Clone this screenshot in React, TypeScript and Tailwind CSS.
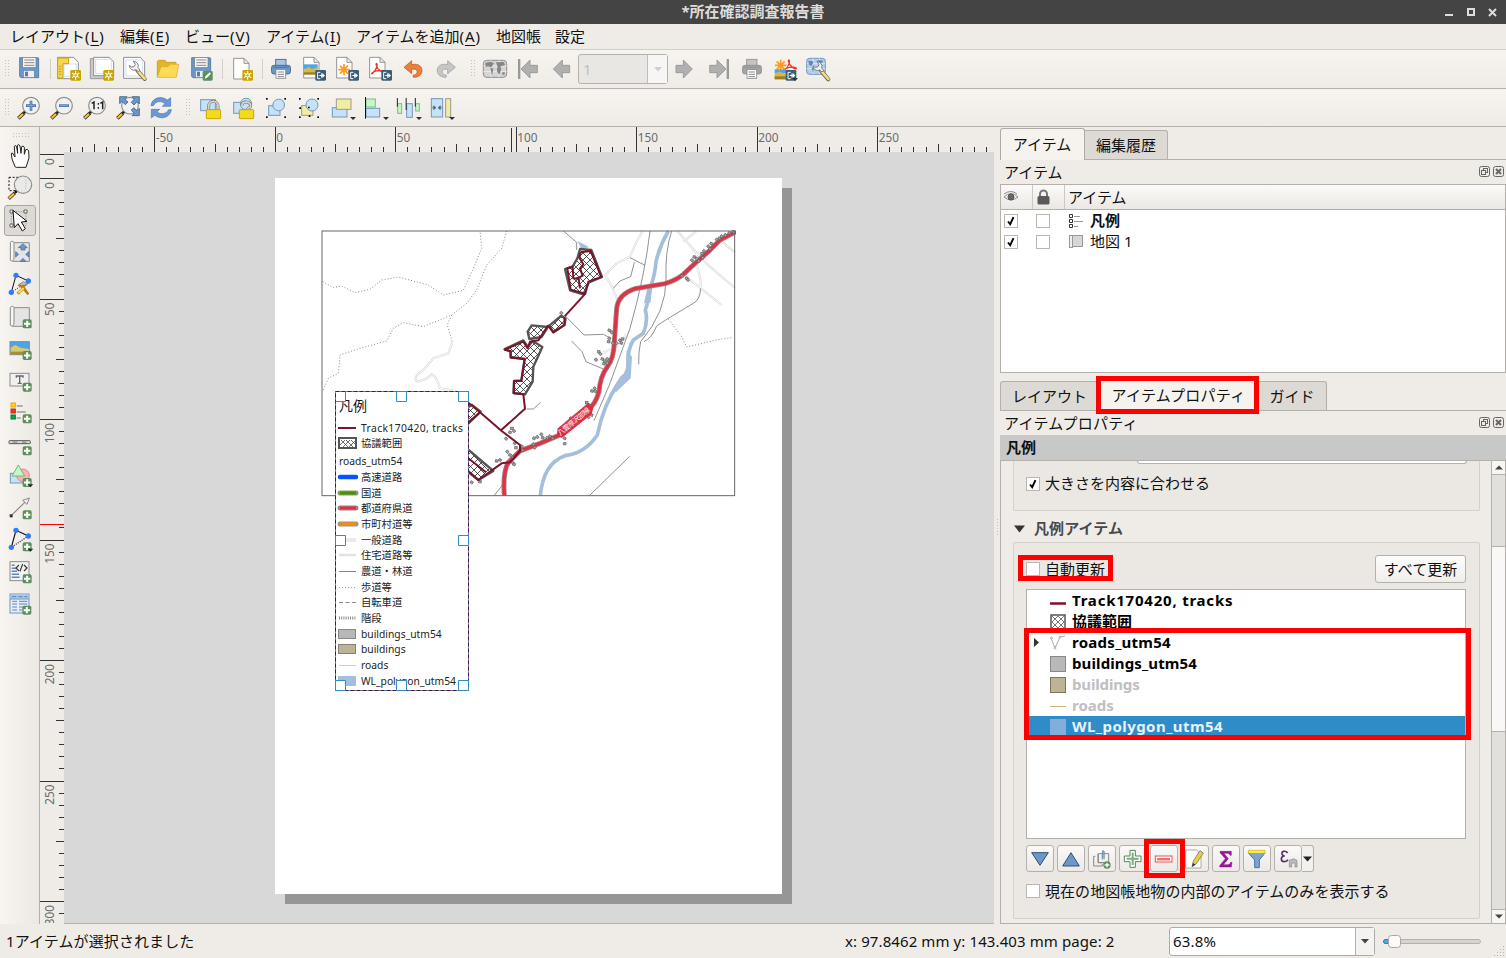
import React from 'react';

type Kids = { children?: React.ReactNode };

/* Icon drawn on a grid of three units per pixel; x/y give the grid origin. */
function Ic({ x, y, w = 24, h = 24, children }: Kids & { x: number; y: number; w?: number; h?: number }) {
  return (
    <svg width={w} height={h} viewBox={`${x} ${y} ${w * 3} ${h * 3}`} className="block shrink-0 overflow-visible">
      {children}
    </svg>
  );
}

function Btn({ children }: Kids) {
  return <div className="flex h-8 w-[33px] shrink-0 items-center justify-center">{children}</div>;
}

function Grip() {
  return (
    <svg width="5" height="18" className="block shrink-0">
      {[0, 1, 2, 3, 4, 5].map((i) => (
        <g key={i} fill="#c4c1bc">
          <rect x="0" y={i * 3} width="1" height="1" />
          <rect x="3" y={i * 3} width="1" height="1" />
        </g>
      ))}
    </svg>
  );
}

function Sep() {
  return <div className="h-5 w-px shrink-0 bg-[#d3d0cb]" />;
}

function Star({ x, y }: { x: number; y: number }) {
  return (
    <g transform={`translate(${x} ${y})`}>
      <rect width="32" height="32" rx="4" fill="#c9a500" />
      <path d="M16 3v26M5 9l22 14M27 9L5 23" stroke="#fff" strokeWidth="3.2" />
      <circle cx="16" cy="16" r="6.5" fill="#fff" />
      <circle cx="16" cy="16" r="3.5" fill="#c9a500" />
    </g>
  );
}

function Plus({ x, y }: { x: number; y: number }) {
  return (
    <g transform={`translate(${x} ${y})`}>
      <rect width="27" height="27" rx="5" fill="#5b8f5b" />
      <path d="M13.500 4v19M4 13.500h19" stroke="#fff" strokeWidth="6" />
    </g>
  );
}

function Export({ x, y }: { x: number; y: number }) {
  return (
    <g transform={`translate(${x} ${y})`}>
      <rect width="32" height="32" rx="4" fill="#3d5d75" />
      <path d="M15 7H7v19h8M19 10v13M12 16.500h12" fill="none" stroke="#fff" strokeWidth="3" />
      <path d="M21 9l8 7.500-8 7.500z" fill="#fff" />
    </g>
  );
}

function Floppy({ x, y }: { x: number; y: number }) {
  return (
    <g transform={`translate(${x} ${y})`}>
      <path d="M2 2H56a3 3 0 0 1 3 3V62H6L2 58Z" fill="#6b98c8" stroke="#4a73a3" strokeWidth="2.500" />
      <rect x="11" y="1" width="40" height="31" fill="#f4f4f4" stroke="#777" strokeWidth="2" />
      <path d="M16 9H46M16 17H46M16 25H46" stroke="#8a8a8a" strokeWidth="3" />
      <rect x="13" y="40" width="33" height="22" fill="#eee" stroke="#5c7fa8" strokeWidth="2" />
      <rect x="18" y="44" width="9" height="14" fill="#4f7fb5" />
    </g>
  );
}

function Sheet({ x, y }: { x: number; y: number }) {
  return (
    <path
      transform={`translate(${x} ${y})`}
      d="M1 1H32L47 16V63H1ZM32 1V16H47"
      fill="#fff"
      stroke="#8c8c8c"
      strokeWidth="2.800"
    />
  );
}

function Wrench({ x, y }: { x: number; y: number }) {
  return (
    <g transform={`translate(${x} ${y})`}>
      <path d="M26 28L48 54" stroke="#6f6540" strokeWidth="12" strokeLinecap="round" />
      <path d="M28 30L48 53" stroke="#f1df83" strokeWidth="8" strokeLinecap="round" />
      <path
        d="M2 13a14 14 0 0 0 20 13l7 6 5-5-6-7A14 14 0 0 0 14 1l6 9-4 7-8 1Z"
        fill="#f2f2f2"
        stroke="#666"
        strokeWidth="2.500"
      />
    </g>
  );
}

function Printer({ x, y, gray }: { x: number; y: number; gray?: boolean }) {
  const a = gray ? '#a3a3a3' : '#6b98c8';
  const b = gray ? '#909090' : '#3f6488';
  return (
    <g transform={`translate(${x} ${y})`}>
      <rect x="14" y="1" width="31" height="22" fill={gray ? '#c3c3c3' : '#a9c4e0'} stroke={b} strokeWidth="2.500" />
      <rect x="1.500" y="19" width="57" height="26" rx="7" fill={a} stroke={b} strokeWidth="2.500" />
      <path d="M6 25H54" stroke={b} strokeWidth="2" />
      <rect x="15" y="32" width="29" height="26" fill="#fff" stroke="#8c8c8c" strokeWidth="2.500" />
      <path d="M20 39H39M20 46H39M20 53H39" stroke="#888" strokeWidth="3" />
    </g>
  );
}

function Asterisk({ x, y }: { x: number; y: number }) {
  return (
    <path
      transform={`translate(${x} ${y})`}
      d="M17 0V34M0 17H34M5 5L29 29M29 5L5 29"
      stroke="#ff9a1a"
      strokeWidth="5"
    />
  );
}

function Acrobat({ x, y }: { x: number; y: number }) {
  return (
    <path
      transform={`translate(${x} ${y})`}
      d="M14 0C20 0 16 17 2 31C-2 34 -1 27 9 24C22 20 38 21 37 26C34 29 17 20 13 4Z"
      fill="none"
      stroke="#f0372c"
      strokeWidth="3.800"
    />
  );
}

function Arrow({ x, y, flip, bar }: { x: number; y: number; flip?: boolean; bar?: boolean }) {
  return (
    <g transform={flip ? `translate(${x + 60} ${y}) scale(-1 1)` : `translate(${x} ${y})`} fill="#b0b0b0" stroke="#939393" strokeWidth="2.500">
      {bar && <rect x="0" y="0" width="7" height="60" stroke="none" fill="#999" />}
      <path d="M9 30L36 3V19H58V41H36V57Z" />
    </g>
  );
}

function Lens({ x, y, children }: Kids & { x: number; y: number }) {
  return (
    <g transform={`translate(${x} ${y})`}>
      <path d="M3 65L20 49" stroke="#3a3420" strokeWidth="11" />
      <path d="M4 64L17 52" stroke="#ffc52e" strokeWidth="6" />
      <circle cx="22" cy="46" r="4.500" fill="#111" />
      <circle cx="41" cy="27" r="25" fill="#f1f1f1" stroke="#8d8d8d" strokeWidth="3.500" />
      {children}
    </g>
  );
}

function Drop({ x, y }: { x: number; y: number }) {
  return <path d={`M${x - 9} ${y}h18l-9 9z`} fill="#2e2e2e" />;
}

function Padlock({ x, y, open }: { x: number; y: number; open?: boolean }) {
  const shackle = open ? 'M8 13C12 2 34 0 35 16C35 22 28 20 24 26' : 'M8 28V16A14 14 0 0 1 36 16V28';
  return (
    <g transform={`translate(${x} ${y})`}>
      <path d={shackle} fill="none" stroke="#767676" strokeWidth="9" />
      <path d={shackle} fill="none" stroke="#d8d8d0" strokeWidth="5" />
      <rect x="1" y="27" width="43" height="27" rx="2" fill="#f2da1c" stroke="#c9a500" strokeWidth="3" />
    </g>
  );
}

const blue = { fill: '#c5e2f8', stroke: '#6f9ab8', strokeWidth: 3 };
const green = { fill: '#c6f5c8', stroke: '#7dbb80', strokeWidth: 3 };
const yellow = { fill: '#f3ee9e', stroke: '#999', strokeWidth: 3 };

function Corners({ x, y }: { x: number; y: number }) {
  return (
    <g fill="#000">
      {[0, 55].map((a) => [0, 55].map((b) => <rect key={`${a}-${b}`} x={x + a} y={y + b} width="5" height="5" />))}
    </g>
  );
}

const undoPath =
  'M1212 202L1235 182V194C1255 189 1267 199 1266 213C1265 225 1255 232 1240 232L1239 226C1250 224 1254 217 1250 211C1247 207 1242 207 1235 208V221Z';

function TopBarOne() {
  return (
    <div className="flex h-[39px] items-center border-b border-[#b4b1ad] bg-linear-to-b from-[#f7f4f0] to-[#efece7] pl-[5px]">
      <Grip />
      <div className="w-[2.500px]" />
      <Btn><Ic x={51} y={171}><Floppy x={57} y={171} /></Ic></Btn>
      <div className="w-[4px]" /><Sep /><div className="w-[2px]" />
      <Btn>
        <Ic x={171} y={171}>
          <path d="M173 172H221L235 187V236H173Z" fill="#fff" stroke="#8c8c8c" strokeWidth="3" />
          <path d="M192 192H229V229H192Z" fill="none" stroke="#c8d6f2" strokeWidth="2.500" />
          <path d="M173 174H206V191H189V234H173Z" fill="#f7d558" stroke="#c9a500" strokeWidth="3" />
          <path d="M177 199h7M177 207h7M177 215h7M177 223h7" stroke="#a58200" strokeWidth="2" />
          <Star x={211} y={210} />
        </Ic>
      </Btn>
      <Btn>
        <Ic x={270} y={171}>
          <path d="M271 176H327V236H271Z" fill="#c9c9c9" stroke="#9a9a9a" strokeWidth="3" />
          <path d="M281 172H328L341 186V227H281Z" fill="#fff" stroke="#8c8c8c" strokeWidth="3" />
          <path d="M287 178H334V221H287Z" fill="none" stroke="#c8d6f2" strokeWidth="2.500" />
          <Star x={310} y={210} />
        </Ic>
      </Btn>
      <Btn>
        <Ic x={369} y={171}>
          <path d="M371 172H421L434 186V235H371Z" fill="#fff" stroke="#8c8c8c" strokeWidth="3" />
          <path d="M378 180H427V228H378Z" fill="none" stroke="#c8d6f2" strokeWidth="2.500" />
          <Wrench x={386} y={183} />
        </Ic>
      </Btn>
      <Btn>
        <Ic x={468} y={171}>
          <path d="M472 231V184L475 181H495L499 187H528V195" fill="#e3b428" stroke="#c79b1b" strokeWidth="2.500" />
          <path d="M472 232L483 200H504L510 193H536L529 232Z" fill="#ffda55" stroke="#dcb12f" strokeWidth="2.500" />
        </Ic>
      </Btn>
      <Btn>
        <Ic x={567} y={171}>
          <Floppy x={573} y={171} />
          <rect x="608" y="213" width="30" height="29" rx="4" fill="#5b8f5b" />
          <path d="M614 236l3-8 12-11 4 4-12 12z" fill="#fff" />
        </Ic>
      </Btn>
      <div className="w-[4px]" /><Sep /><div className="w-[4px]" />
      <Btn><Ic x={692} y={171}><Sheet x={699} y={174} /><Star x={726} y={210} /></Ic></Btn>
      <div className="w-[2px]" /><Sep /><div className="w-[2px]" />
      <Btn><Ic x={807} y={171}><Printer x={813} y={177} /></Ic></Btn>
      <Btn>
        <Ic x={905} y={171}>
          <Sheet x={909} y={171} />
          <rect x="910" y="193" width="42" height="14" fill="#4aa6ea" />
          <path d="M910 210L924 200L935 207L952 202V222H910Z" fill="#d7b74c" />
          <path d="M910 217H952V224H910Z" fill="#9c7e20" />
          <Export x={945} y={210} />
        </Ic>
      </Btn>
      <Btn><Ic x={1004} y={171}><Sheet x={1008} y={171} /><Asterisk x={1014} y={192} /><Export x={1044} y={210} /></Ic></Btn>
      <Btn><Ic x={1103} y={171}><Sheet x={1107} y={171} /><Acrobat x={1114} y={190} /><Export x={1143} y={210} /></Ic></Btn>
      <Btn>
        <Ic x={1203} y={171}>
          <path d={undoPath} fill="#ee7f3b" stroke="#b9531b" strokeWidth="2" />
        </Ic>
      </Btn>
      <Btn>
        <Ic x={1302} y={171}>
          <path d={undoPath} transform="translate(2578 0) scale(-1 1)" fill="#c6c6c6" stroke="#a2a2a2" strokeWidth="2.500" />
        </Ic>
      </Btn>
      <div className="w-[8px]" /><Grip /><div className="w-[3px]" />
      <Btn>
        <Ic x={129} y={171}>
          <rect x="130" y="181" width="70" height="51" rx="10" fill="#d4d4d4" stroke="#8e8e8e" strokeWidth="3" />
          <path d="M130 198H200M130 215H200M153 181V232M177 181V232" stroke="#efefef" strokeWidth="2.500" />
          <path d="M136 188l17-3 9 5-8 12-11-3-6 2zM151 203l9 3-4 21zM168 187l24-1 3 10-14 3 3 10-7 2-5-12zM171 203l13 5-6 16-7-10zM187 217h7v7h-7z" fill="#858585" />
        </Ic>
      </Btn>
      <Btn><Ic x={228} y={171}><Arrow x={234} y={177} bar /></Ic></Btn>
      <Btn><Ic x={326} y={171}><Arrow x={330} y={177} /></Ic></Btn>
      <div className="mr-px ml-[0.500px] flex h-[30px] w-[90px] rounded-[3px] border border-[#b5b2ae] bg-[#e9e7e4]">
        <div className="flex flex-1 items-center pl-1 text-[15px] text-[#c2c0bc]">1</div>
        <div className="flex w-[20px] items-center justify-center border-l border-[#bfbcb7] bg-[#f7f6f4]">
          <svg width="8" height="5"><path d="M0 0h8l-4 4.500z" fill="#d1cfcc" /></svg>
        </div>
      </div>
      <Btn><Ic x={698} y={171}><Arrow x={702} y={177} flip /></Ic></Btn>
      <Btn><Ic x={798} y={171}><Arrow x={804} y={177} flip bar /></Ic></Btn>
      <Btn><Ic x={897} y={171}><Printer x={903} y={177} gray /></Ic></Btn>
      <Btn>
        <Ic x={998} y={171}>
          <Acrobat x={1031} y={180} />
          <Asterisk x={1004} y={179} />
          <rect x="1003" y="208" width="34" height="12" fill="#4aa6ea" />
          <path d="M1003 238V220l14-5 20 7v16z" fill="#d7b74c" />
          <path d="M1003 229h34v9h-34z" fill="#9c7e20" />
          <Export x={1036} y={210} />
          <Drop x={1064} y={234} />
        </Ic>
      </Btn>
      <Btn>
        <Ic x={1095} y={171}>
          <rect x="1097" y="175" width="56" height="48" rx="9" fill="#b6cdea" stroke="#6e95c2" strokeWidth="3" />
          <path d="M1097 191H1153M1097 206H1153M1116 175V223M1135 175V223" stroke="#e0ebf8" strokeWidth="2.500" />
          <path d="M1102 182l12 1 3 5-6 10-7-4zM1112 202l7 3-3 13zM1128 181h16l2 6-9 3z" fill="#6089ba" />
          <Wrench x={1114} y={184} />
        </Ic>
      </Btn>
    </div>
  );
}

function TopBarTwo() {
  return (
    <div className="flex h-[38px] items-center border-b border-[#b4b1ad] bg-linear-to-b from-[#f7f4f0] to-[#efece7] pl-[5px]">
      <Grip />
      <div className="w-[2.500px]" />
      <Btn><Ic x={51} y={288}><Lens x={52} y={290}><path d="M41 12V42M26 27H56" stroke="#3f6ea3" strokeWidth="8" /><path d="M41 14V40M28 27H54" stroke="#7ba4d0" strokeWidth="4" /></Lens></Ic></Btn>
      <Btn><Ic x={150} y={288}><Lens x={151} y={290}><path d="M26 27H56" stroke="#3f6ea3" strokeWidth="8" /><path d="M28 27H54" stroke="#7ba4d0" strokeWidth="4" /></Lens></Ic></Btn>
      <Btn><Ic x={249} y={288}><Lens x={250} y={290}><path d="M25 20l7-4v22M51 20l7-4v22" fill="none" stroke="#222" strokeWidth="4.500" /><path d="M43 19h4v5h-4zM43 31h4v5h-4z" fill="#222" /></Lens></Ic></Btn>
      <Btn>
        <Ic x={348} y={288}>
          <Lens x={349} y={290} />
          <g fill="#6b98c8" stroke="#3f6488" strokeWidth="2.500">
            <path d="M359 290h22l-7 7 10 9-8 8-10-10-7 7z" />
            <path d="M418 290v22l-7-7-9 10-8-8 9-10-7-7z" />
            <path d="M418 347v-22l-7 7-10-9-7 7 9 10-7 7z" />
          </g>
        </Ic>
      </Btn>
      <Btn>
        <Ic x={447} y={288}>
          <path d="M453 317C455 298 474 288 493 295L502 300L512 293V319H487L495 311C483 301 468 303 460 317Z" fill="#6b98d6" stroke="#4779b5" strokeWidth="2" />
          <path d="M514 329C511 349 491 358 473 351L464 346L454 354V328H479L471 336C484 345 499 342 506 329Z" fill="#6b98d6" stroke="#4779b5" strokeWidth="2" />
        </Ic>
      </Btn>
      <div className="w-[8px]" /><Grip /><div className="w-[3px]" />
      <Btn><Ic x={594} y={288}><rect x="602" y="299" width="44" height="33" {...blue} /><Padlock x={618} y={302} /></Ic></Btn>
      <Btn><Ic x={693} y={288}><rect x="701" y="307" width="33" height="33" {...blue} /><circle cx="738" cy="312" r="17" {...blue} /><Padlock x={717} y={302} open /></Ic></Btn>
      <Btn><Ic x={792} y={288}><rect x="806" y="317" width="34" height="29" {...blue} /><circle cx="836" cy="315" r="17.500" {...blue} /><Corners x={798} y={294} /></Ic></Btn>
      <Btn><Ic x={891} y={288}><rect x="905" y="317" width="34" height="29" {...yellow} /><circle cx="936" cy="315" r="18" {...blue} /><Corners x={897} y={294} /><path d="M898 322h5v5h-5zM924 320h5v5h-5zM926 346h5v5h-5z" /></Ic></Btn>
      <Btn><Ic x={991} y={288}><rect x="998" y="323" width="44" height="28" {...blue} /><rect x="1010" y="297" width="44" height="31" {...yellow} /><Drop x={1060} y={351} /></Ic></Btn>
      <Btn><Ic x={1089} y={288}><rect x="1098" y="297" width="28" height="24" {...green} /><rect x="1098" y="325" width="41" height="26" {...blue} /><path d="M1096.500 291V356" stroke="#111" strokeWidth="3" /><Drop x={1158} y={351} /></Ic></Btn>
      <Btn>
        <Ic x={1188} y={288}>
          <rect x="1193" y="311" width="12" height="29" {...green} /><rect x="1220" y="311" width="17" height="41" {...blue} /><rect x="1247" y="311" width="11" height="22" {...green} />
          <path d="M1192 294V320M1218.500 294V330M1246 294V320" stroke="#222" strokeWidth="3" /><Drop x={1257} y={351} />
        </Ic>
      </Btn>
      <Btn>
        <Ic x={-33} y={288}>
          <rect x="-26" y="296" width="34" height="55" {...blue} /><rect x="17" y="296" width="15" height="55" {...yellow} />
          <path d="M-25 323H-14M-4 323H7M-19 317V329L-12 323ZM1 317V329L-6 323Z" fill="#4a6b88" stroke="#4a6b88" strokeWidth="2" /><Drop x={36} y={351} />
        </Ic>
      </Btn>
    </div>
  );
}

function Tool({ children, on }: Kids & { on?: boolean }) {
  return (
    <div className="flex h-[32.100px] w-full items-center justify-center">
      <div className={on ? 'flex h-[31px] w-8 items-center justify-center rounded-[3px] border border-[#aaa7a3] bg-[#dddad6]' : 'flex h-[31px] w-8 items-center justify-center'}>
        {children}
      </div>
    </div>
  );
}

function Roll() {
  return (
    <>
      <path d="M39 6H89V62H39Z" fill="#e4e4e4" stroke="#8b8b8b" strokeWidth="3" />
      <path d="M32 5C34 1 42 1 43 5V52C43 60 36 63 32 59Z" fill="#f7f7f7" stroke="#8b8b8b" strokeWidth="3" />
    </>
  );
}

function Toolbox() {
  return (
    <div className="flex w-10 shrink-0 flex-col border-r border-[#b4b1ad] bg-linear-to-r from-[#f8f5f1] to-[#ece9e5] pt-[6px]">
      <svg width="40" height="7" className="block">
        {[0, 1, 2, 3, 4, 5].map((i) => (
          <g key={i} fill="#c4c1bc"><rect x={13 + i * 3} y="0" width="1" height="1" /><rect x={13 + i * 3} y="3" width="1" height="1" /></g>
        ))}
      </svg>
      <Tool>
        <Ic x={25} y={56}>
          <path d="M46 124L37 101L35 84Q39 79 43 91L46 95L44 63Q48 57 51 65L54 84L53 60Q58 55 61 62L64 84L66 64Q71 59 74 66V87L78 73Q84 69 87 77L88 98L79 126H50Z" fill="#fff" stroke="#222" strokeWidth="3" />
        </Ic>
      </Tool>
      <Tool>
        <Ic x={25} y={153}>
          <rect x="28" y="157" width="50" height="40" fill="none" stroke="#111" strokeWidth="3" strokeDasharray="6 5" />
          <path d="M27 221L46 203" stroke="#3a3420" strokeWidth="10" /><path d="M28 220L43 206" stroke="#ffc52e" strokeWidth="6" />
          <circle cx="49" cy="200" r="4" />
          <circle cx="70" cy="179" r="26" fill="#e9e9e9" fillOpacity="0.95" stroke="#8d8d8d" strokeWidth="3.500" />
          <path d="M78 165v28" stroke="#ccc" strokeWidth="3" strokeDasharray="4 4" />
        </Ic>
      </Tool>
      <Tool on>
        <Ic x={25} y={250}>
          <rect x="35" y="261" width="44" height="41" fill="none" stroke="#777" strokeWidth="2.500" strokeDasharray="3 4" />
          <g fill="#eee" stroke="#555" strokeWidth="2.500"><path d="M31 256h9v9h-9zM73 256h9v9h-9zM31 298h9v9h-9z" /></g>
          <path d="M40 257L44 309L55 297L68 319L77 312L65 292L82 290Z" fill="#fff" stroke="#111" strokeWidth="3" />
        </Ic>
      </Tool>
      <Tool><Ic x={25} y={-2}><Roll /><g fill="#6b98c8" stroke="#3f6488" strokeWidth="2"><path d="M70 9l13 12h-7v7H64v-7h-8zM48 33l9 8-9 8zM87 33l-9 8 9 8zM62 62l8-9 8 9z" /></g></Ic></Tool>
      <Tool>
        <Ic x={25} y={440}>
          <path d="M35 501L49 450L86 467" fill="none" stroke="#111" strokeWidth="3" />
          <path d="M35 501L60 485" stroke="#111" strokeWidth="3" strokeDasharray="3 4" />
          <path d="M54 480q12-14 32-5l-11 10 14 20-6 4-17-20z" fill="#c2780f" /><path d="M55 481l15-12 16 5-12 6z" fill="#bdbdbd" stroke="#777" strokeWidth="2" />
          <path d="M54 505L72 488" stroke="#9c8a1e" strokeWidth="9" /><path d="M56 503L72 488" stroke="#ffe23e" strokeWidth="6" />
          <g fill="#2f7cf6"><circle cx="49" cy="450" r="8" /><circle cx="86" cy="467" r="8" /><circle cx="35" cy="501" r="8" /></g>
        </Ic>
      </Tool>
      <Tool><Ic x={25} y={-2}><Roll /><Plus x={69} y={41} /></Ic></Tool>
      <Tool>
        <Ic x={25} y={636}>
          <rect x="31" y="650" width="58" height="39" fill="#4aa6ea" stroke="#888" strokeWidth="3" />
          <path d="M33 668L47 660L62 668L88 672V687H33Z" fill="#d9c96e" /><path d="M33 680H88V688H33Z" fill="#a5902c" /><Plus x={69} y={678} />
        </Ic>
      </Tool>
      <Tool><Ic x={25} y={-2}><rect x="31" y="11" width="57" height="38" fill="#f0f0f0" stroke="#8b8b8b" strokeWidth="3" /><path d="M50 24V19H70V24M60 19V40M54 41H66" fill="none" stroke="#666" strokeWidth="4" /><Plus x={69} y={39} /></Ic></Tool>
      <Tool>
        <Ic x={25} y={95}>
          <rect x="34" y="101" width="13" height="12" fill="#ffdd00" stroke="#f09b2e" strokeWidth="3" /><rect x="34" y="119" width="13" height="12" fill="#f03c10" stroke="#b43010" strokeWidth="3" /><rect x="34" y="137" width="13" height="12" fill="#00b050" stroke="#176b3c" strokeWidth="3" />
          <path d="M51 110H69M51 128H78M51 146H63" stroke="#999" strokeWidth="5" /><Plus x={69} y={135} />
        </Ic>
      </Tool>
      <Tool><Ic x={25} y={191}><rect x="28" y="214" width="64" height="9" rx="2" fill="#ddd" stroke="#555" strokeWidth="3" /><path d="M39 218.500H53M67 218.500H80" stroke="#888" strokeWidth="4" /><Plus x={69} y={231} /></Ic></Tool>
      <Tool><Ic x={25} y={288}><rect x="32" y="313" width="44" height="29" {...blue} /><circle cx="70" cy="319" r="19" fill="#f8b3b3" stroke="#e58585" strokeWidth="3" /><path d="M56 288L75 321H37Z" fill="#c6f5c8" stroke="#6fb974" strokeWidth="3" /><Plus x={69} y={327} /><Drop x={92} y={346} /></Ic></Tool>
      <Tool><Ic x={25} y={383}><path d="M35 438L84 391" stroke="#888" strokeWidth="3.500" /><path d="M89 386L69 393L82 405Z" fill="#eee" stroke="#777" strokeWidth="2.500" /><rect x="30" y="435" width="9" height="9" fill="#333" /><Plus x={69} y={423} /></Ic></Tool>
      <Tool>
        <Ic x={25} y={479}>
          <path d="M35 534L49 483L86 500" fill="none" stroke="#111" strokeWidth="3.500" /><path d="M86 500L35 534" stroke="#111" strokeWidth="3.500" strokeDasharray="3 4" />
          <g fill="#2f7cf6"><circle cx="49" cy="483" r="8" /><circle cx="86" cy="500" r="8" /><circle cx="35" cy="534" r="8" /></g><Plus x={69} y={519} /><Drop x={92} y={538} />
        </Ic>
      </Tool>
      <Tool>
        <Ic x={25} y={575}>
          <rect x="31" y="577" width="57" height="57" fill="#f3f3f3" stroke="#8b8b8b" strokeWidth="3" />
          <path d="M36 588H45M36 597H49M36 606H52M36 615H58M36 624H60" stroke="#5c88be" strokeWidth="4.500" />
          <path d="M58 587l-9 9 9 9M73 587l9 9-9 9M69 584l-8 22" fill="none" stroke="#333" strokeWidth="3.500" /><Plus x={69} y={615} />
        </Ic>
      </Tool>
      <Tool>
        <Ic x={25} y={671}>
          <rect x="31" y="674" width="57" height="57" fill="#e6edf7" stroke="#6e95c2" strokeWidth="3" /><path d="M32 676H87V688H32Z" fill="#a9c8e8" />
          <path d="M31 689H88" stroke="#6e95c2" strokeWidth="3" /><path d="M36 682H50M56 682H69M74 682H84M38 696H52M58 696H83M38 704H52M58 704H83M38 713H52M58 713H68M38 722H52M58 722H68" stroke="#5c88be" strokeWidth="3" /><Plus x={68} y={709} />
        </Ic>
      </Tool>
    </div>
  );
}

const range = (n: number) => Array.from({ length: n }, (_, i) => i);

function RulerTop() {
  return (
    <svg width="955" height="25" className="block" fontFamily="'Noto Sans', sans-serif" fontSize="11.800" fill="#6b6b6b">
      {range(77).map((i) => {
        const x = Math.floor(30.45 + 12.05 * i);
        const k = i - 7;
        const len = k % 10 === 0 ? 25 : k % 5 === 0 ? 8 : 5;
        return x < 955 ? <rect key={i} x={x} y={25 - len} width="1" height={len} fill="#333" /> : null;
      })}
      <rect x="471" y="1" width="1" height="24" fill="#333" />
      {[-50, 0, 50, 100, 150, 200, 250].map((v, i) => (
        <text key={v} x={115.800 + 120.500 * i} y="15">{v}</text>
      ))}
    </svg>
  );
}

function RulerLeft() {
  return (
    <svg width="24" height="771" className="block" fontFamily="'Noto Sans', sans-serif" fontSize="11.800" fill="#6b6b6b">
      <rect x="0" y="2" width="24" height="1" fill="#333" />
      <rect x="19" y="14" width="5" height="1" fill="#333" />
      {range(62).map((i) => {
        const y = Math.round(26 + 12.05 * i);
        const len = i % 10 === 0 ? 24 : i % 5 === 0 ? 8 : 5;
        return <rect key={i} x={24 - len} y={y} width={len} height="1" fill="#333" />;
      })}
      <rect x="0" y="372" width="24" height="1" fill="#f00" />
      <text transform="translate(14 13) rotate(-90)">0</text>
      {[0, 50, 100, 150, 200, 250, 300].map((v, i) => (
        <text key={v} textAnchor="end" transform={`translate(14 ${30 + 120.500 * i}) rotate(-90)`}>{v}</text>
      ))}
    </svg>
  );
}

const dark = '#7a1428';

function MapItem() {
  const casing = { fill: 'none', stroke: '#dadada', strokeWidth: 6.5 };
  const inner = { fill: 'none', stroke: '#fff', strokeWidth: 2.6 };
  const thin = { fill: 'none', stroke: '#808080', strokeWidth: 2.6 };
  const dots = { fill: 'none', stroke: '#888', strokeWidth: 3, strokeDasharray: '3 6' };
  const area = { fill: 'url(#hatch)', stroke: '#555', strokeWidth: 7, strokeLinejoin: 'round' as const };
  const track = { fill: 'none', stroke: dark, strokeWidth: 6, strokeLinejoin: 'round' as const };
  const road = 'M648 20L600 45L565 80L525 115L490 148Q470 165 435 176L345 191Q295 208 290 250L283 350Q282 400 262 425Q240 455 237 500Q225 540 205 552L115 632L60 655L0 678L-35 712Q-52 740 -47 812';
  const minor = [
    'M368 18Q345 55 330 95L290 115L256 150L276 185L292 222',
    'M472 18L530 85Q560 120 645 188',
    'M490 148L605 240',
    'M530 85L530 130M490 50L530 18M605 50L645 82M525 115Q545 150 542 195',
    'M245 385L290 365L318 330',
  ];
  const houses: [number, number][] = [
    [200, 533], [207, 540], [216, 498], [224, 490], [226, 499], [236, 380], [241, 387], [268, 316], [275, 322], [268, 340], [266, 350], [278, 354], [247, 402], [255, 408], [262, 402], [252, 416], [262, 414], [300, 346], [308, 342], [290, 354], [304, 354], [228, 404],
    [516, 106], [523, 96], [530, 101], [536, 108], [546, 86], [552, 78], [548, 98], [565, 64], [574, 56], [570, 72], [590, 44], [598, 40], [605, 34], [616, 30], [628, 24], [640, 20], [500, 160], [486, 153], [504, 165], [42, 640], [52, 636], [64, 628], [68, 638], [82, 638], [90, 634], [40, 658], [44, 668], [98, 640], [-16, 655], [8, 676], [-12, 668], [-38, 680], [-30, 690], [-22, 698], [-60, 705], [-70, 708], [-22, 713], [-18, 718], [-24, 610], [-18, 618], [-30, 622], [-42, 641], [134, 640], [134, 656], [205, 577], [215, 570], [152, 580], [-145, 772], [-120, 770], [124, 264], [5, 664],
  ];
  return (
    <svg width="415" height="267" viewBox="-597 15 1245 801" className="absolute left-[257px] top-[78px]">
      <defs>
        <pattern id="hatch" width="21" height="21" patternUnits="userSpaceOnUse">
          <rect width="21" height="21" fill="#fff" />
          <path d="M0 0L21 21M21 0L0 21" stroke="#222" strokeWidth="2.300" />
        </pattern>
      </defs>
      <rect x="-594" y="18" width="1238" height="794" fill="#fff" />
      <g>
        {minor.map((d) => <path key={d} d={d} {...casing} />)}
        {minor.map((d) => <path key={d} d={d} {...inner} />)}
        <path d="M390 18Q375 150 330 310L268 480L222 587M455 18Q435 80 438 160Q440 260 362 350Q355 380 356 418" {...thin} />
        <path d="M130 18L170 52V75M330 98L375 121M343 112L332 155L300 168L280 190M542 190Q540 225 520 235L440 283L410 303Q395 340 372 350M135 272L192 330L250 328L272 340M155 348L186 380L198 410L250 432M208 812L329 694M20 552L40 552L62 532M-78 812L-48 775" {...thin} />
        <path d="M445 283L485 335L500 366L590 345L640 337" {...dots} />
        <path d="M445 18Q420 60 408 110Q405 150 392 185Q385 230 376 255Q385 290 370 325L340 345Q320 380 325 420Q322 450 295 475Q250 540 232 630Q195 685 135 692Q70 715 61 812" fill="none" stroke="#a4bedd" strokeWidth="11" />
        <path d="M382 190L395 190L392 232L372 235ZM320 375L336 395L332 460L300 490L288 502L278 492L300 455L318 440Z" fill="#a4bedd" />
        <path d="M172 48L207 66L186 74Z" fill="#a4bedd" />
        <path d={road} fill="none" stroke="#a88488" strokeWidth="15" />
        <path d={road} fill="none" stroke="#dc3446" strokeWidth="10" />
        {houses.map(([x, y], i) => <rect key={i} x={x - 4} y={y - 3.500} width="8" height="7" fill="#a5a5a5" stroke="#5f5f5f" strokeWidth="2" transform={`rotate(${(i * 37) % 60} ${x} ${y})`} />)}
        <path d="M180 72L214 75L246 156L207 172L190 208L150 196L135 132L158 124L172 100Z" {...area} />
        <path d="M182 82L212 78L244 156L205 170L196 206L152 194L142 130L158 126L160 160L176 162L180 190M182 82L178 98L190 118L180 130L188 152L168 162" {...track} />
        <path d="M196 206L134 274" {...track} />
        <path d="M35 301L84 306L65 336L28 342L23 320ZM88 302L124 272L137 282L133 300L100 322Z" {...area} />
        <path d="M-46 372L10 346L24 366L38 348L67 366L40 425L38 470L15 508L-20 504L-18 468L4 466L14 402L-28 396L-28 380Z" {...area} />
        <path d="M133 276L134 300L100 322L84 302L55 346L30 350L23 370L10 350L-46 374L-28 378L-28 398L14 402L4 468L-18 468L-18 505L10 508L15 551L-57 616" {...track} />
      </g>
      <g transform="translate(-600 0)">
        <path d="M8 170L40 188L65 183L105 203L150 193L185 165L235 156L325 180L370 210L430 196L460 130L485 70L480 18M560 18L545 70L500 120L470 195L440 235L395 270L310 305L250 293L220 310L200 348L120 370L60 390L55 445L25 460L8 500M395 270L382 300L397 350" {...dots} />
        <path d="M397 352L385 385L340 400L310 435Q275 458 292 470Q320 465 335 448Q350 455 360 490L405 497L450 530" {...casing} />
        <path d="M397 352L385 385L340 400L310 435Q275 458 292 470Q320 465 335 448Q350 455 360 490L405 497L450 530" {...inner} />
        <path d="M420 560L456 540L482 560L430 610L380 620ZM400 640L445 674L520 738L475 765L400 705Z" {...area} />
        <path d="M440 530L456 542L480 562L430 605M480 562L545 618L600 660L600 678L570 712L545 715L475 765L430 725M445 700L498 742" {...track} />
      </g>
      <path d="M115 612L205 537L217 550L213 566L125 636L113 630Z" fill="#dc2f42" stroke="#dc2f42" strokeWidth="5" strokeLinejoin="round" />
      <text x="121" y="633" transform="rotate(-40 121 633)" fontSize="21" fill="#fff" textLength="118" fontFamily="'Noto Sans CJK JP', sans-serif">八雲厚沢部線</text>
      <rect x="-594" y="18" width="1238" height="794" fill="none" stroke="#666" strokeWidth="3" />
    </svg>
  );
}

const legendRows: [string, React.ReactNode][] = [
  ['高速道路', <path d="M2 5H18" stroke="#0055ff" strokeWidth="4.500" strokeLinecap="round" />],
  ['国道', <><path d="M2 5H18" stroke="#8a9a70" strokeWidth="5" strokeLinecap="round" /><path d="M2 5H18" stroke="#449500" strokeWidth="3" /></>],
  ['都道府県道', <><path d="M2 5H18" stroke="#a08080" strokeWidth="5" strokeLinecap="round" /><path d="M2 5H18" stroke="#dc3446" strokeWidth="3" /></>],
  ['市町村道等', <><path d="M2 5H18" stroke="#a8927a" strokeWidth="5" strokeLinecap="round" /><path d="M2 5H18" stroke="#f58a14" strokeWidth="3" /></>],
  ['一般道路', <path d="M1 5H18" stroke="#eaeaea" strokeWidth="4" />],
  ['住宅道路等', <path d="M1 5H18" stroke="#e2e2e2" strokeWidth="2.500" />],
  ['農道・林道', <path d="M1 5.500H18" stroke="#888" />],
  ['歩道等', <path d="M1 5.500H18" stroke="#999" strokeDasharray="1 2" />],
  ['自転車道', <path d="M1 5.500H18" stroke="#888" strokeDasharray="4 2.500" />],
  ['階段', <path d="M1 5H18" stroke="#888" strokeWidth="3" strokeDasharray="1 1.200" />],
  ['buildings_utm54', <rect x="0.500" y="0.500" width="17" height="9" fill="#b8b8b8" stroke="#888" />],
  ['buildings', <rect x="0.500" y="0.500" width="17" height="9" fill="#bdb395" stroke="#888070" />],
  ['roads', <path d="M1 5.500H18" stroke="#d8d0b4" />],
  ['WL_polygon_utm54', <rect x="0" y="0" width="18" height="10" fill="#a4bedd" />],
];

function LegendRow({ label, children, wide }: Kids & { label: string; wide?: boolean }) {
  return (
    <div className="flex h-[15.670px] items-center gap-[3px] pl-[3px] whitespace-nowrap">
      <svg width="20" height="10" className="block shrink-0 overflow-visible">{children}</svg>
      <span className={wide ? 'tracking-[0.380px]' : undefined}>{label}</span>
    </div>
  );
}

function Legend() {
  return (
    <div className="absolute left-[271px] top-[239px] h-[300px] w-[134px] overflow-hidden bg-white text-[10.300px] leading-none text-[#222]">
      <div className="pt-[7px] pl-1 text-[14px] leading-[15px] text-[#111]">凡例</div>
      <div className="pt-[7px]">
        <LegendRow label="Track170420, tracks" wide><path d="M0 5H18" stroke={dark} strokeWidth="2" /></LegendRow>
        <LegendRow label="協議範囲">
          <rect x="1" y="0" width="17" height="10" fill="#fff" stroke="#555" strokeWidth="2" />
          <path d="M3 2l7 7M8 2l7 7M13 2l4 4M7 2L2 7M12 2L5 9M17 3l-6 6" stroke="#333" strokeWidth="0.700" />
        </LegendRow>
      </div>
      <div className="flex h-[18px] items-center pt-[2px] pl-1">roads_utm54</div>
      {legendRows.map(([t, g]) => <LegendRow key={t} label={t}>{g}</LegendRow>)}
      <svg width="134" height="300" className="absolute inset-0">
        <rect x="0.500" y="0.500" width="133" height="299" fill="none" stroke="#4aa0d0" />
        <rect x="0.500" y="0.500" width="133" height="299" fill="none" stroke="#5a1030" strokeDasharray="4 2" />
        {[0.5, 61.5, 123.5].map((x) =>
          [0.5, 144.5, 289.5].map((y) => (x === 61.5 && y === 144.5 ? null : <path key={`${x}${y}`} d={x === 0.5 && y === 0.5 ? 'M10.500 0.500V10.500H0.500' : `M${x} ${y}h10v10h-10z`} fill="#fff" stroke="#2f8cc4" />)),
        )}
      </svg>
    </div>
  );
}

function Canvas() {
  return (
    <div className="relative h-[772px] w-[930px] shrink-0 overflow-hidden border-b border-[#b4b1ad] bg-[#d8d8d8]">
      <div className="absolute left-[221px] top-[36px] h-[716px] w-[507px] bg-[#969696]" />
      <div className="absolute left-[211px] top-[26px] h-[716px] w-[507px] bg-white" />
      <MapItem />
      <Legend />
    </div>
  );
}

function DockTitle({ children }: Kids) {
  return (
    <div className="flex h-6 items-center justify-between pr-px pl-[4px]">
      <span>{children}</span>
      <svg width="26" height="12" fill="none" stroke="#666">
        <rect x="0.500" y="0.500" width="10" height="10" rx="2" /><rect x="4.500" y="2.500" width="4" height="4" /><rect x="2.500" y="4.500" width="4" height="4" fill="#efece7" />
        <rect x="14.500" y="0.500" width="10" height="10" rx="2" /><path d="M17 3l5 5M22 3l-5 5" strokeWidth="2" />
      </svg>
    </div>
  );
}

function Check({ on }: { on?: boolean }) {
  return (
    <div className="flex size-[14px] shrink-0 items-center justify-center border border-[#bab7b2] bg-white">
      {on && <svg width="10" height="10"><path d="M2 5.500L4.200 8.200L7.500 1.200" fill="none" stroke="#000" strokeWidth="1.900" /></svg>}
    </div>
  );
}

function ItemsDock() {
  return (
    <div>
      <div className="flex h-[33px] items-end border-b border-[#b4b1ad]">
        <div className="-mb-px flex h-[32px] w-[85px] items-center justify-center rounded-t-[3px] border border-b-0 border-[#aeaba6] bg-[#f6f3ef] pr-px pb-px">アイテム</div>
        <div className="flex h-[29px] w-[83px] items-center justify-center rounded-tr-[3px] border border-b-0 border-l-0 border-[#b4b1ad] bg-[#dddad6]">編集履歴</div>
      </div>
      <DockTitle>アイテム</DockTitle>
      <div className="h-[189px] border border-[#b4b1ad] bg-white">
        <div className="flex h-[25px] border-b border-[#b4b1ad] bg-linear-to-b from-[#fbfaf8] to-[#ebe8e4]">
          <div className="flex w-8 items-center border-r border-[#ccc9c5] pl-[2px]">
            <svg width="16" height="12" fill="none" stroke="#8a8a8a"><path d="M1 6Q8 -1 15 6Q8 12 1 6ZM1 3Q8 -2 14 3" /><circle cx="8" cy="6" r="3" fill="#666" stroke="#555" /></svg>
          </div>
          <div className="flex w-8 items-center border-r border-[#ccc9c5] pl-[4px]">
            <svg width="13" height="16"><path d="M3 8V5a3.500 3.500 0 0 1 7 0V8" fill="none" stroke="#777" strokeWidth="2" /><rect x="0.500" y="7" width="12" height="8.500" rx="1.500" fill="#5a5a5a" /></svg>
          </div>
          <div className="flex items-center pl-[3px]">アイテム</div>
        </div>
        <div className="flex h-[21px] items-center pl-[3px]">
          <Check on /><div className="w-[18px]" /><Check /><div className="w-[19px]" />
          <svg width="14" height="14" className="block"><g fill="#fff" stroke="#333"><path d="M0.500 0.500h3v3h-3zM0.500 5.500h3v3h-3zM0.500 10.500h3v3h-3z" /></g><path d="M5 2.500h6M5 7.500h9M5 12.500h4" stroke="#999" /></svg>
          <b className="pl-[7px]">凡例</b>
        </div>
        <div className="flex h-[21px] items-center pl-[3px]">
          <Check on /><div className="w-[18px]" /><Check /><div className="w-[19px]" />
          <svg width="14" height="13" className="block"><rect x="2.500" y="0.500" width="11" height="11" fill="#d6d6d6" stroke="#999" /><rect x="0.500" y="0.500" width="3" height="12" fill="#eee" stroke="#999" /></svg>
          <span className="pl-[7px]">地図 1</span>
        </div>
      </div>
    </div>
  );
}

function TreeRow({ label, children, muted, sel, branch, track = 'tracking-normal' }: Kids & { label: string; muted?: boolean; sel?: boolean; branch?: boolean; track?: string }) {
  return (
    <div className={sel ? 'flex h-[21px] items-center bg-[#308cc6] text-[#e8f2fa]' : muted ? 'flex h-[21px] items-center text-[#c0c0c0]' : 'flex h-[21px] items-center text-black'}>
      <div className="flex w-[23px] items-center pl-[7px]">{branch && <svg width="6" height="9"><path d="M0 0v9l5-4.500z" fill="#333" /></svg>}</div>
      <svg width="16" height="16" className="block shrink-0">{children}</svg>
      <b className={`pl-[6px] whitespace-nowrap ${track}`}>{label}</b>
    </div>
  );
}

function ToolButton({ children }: Kids) {
  return <div className="flex h-[27px] w-7 items-center justify-center rounded-[3px] border border-[#b4b1ad] bg-linear-to-b from-[#fbfaf9] to-[#ece9e6]">{children}</div>;
}

function PropertiesDock() {
  return (
    <div>
      <div className="flex h-[30px] items-end border-b border-[#b4b1ad]">
        <div className="flex h-[29px] w-[100px] items-center justify-center rounded-tl-[3px] border border-b-0 border-[#b4b1ad] bg-[#dddad6] pr-px">レイアウト</div>
        <div className="-mb-px flex h-[31px] w-[157px] items-center justify-center bg-[#f6f3ef] tracking-[0.250px]">アイテムプロパティ</div>
        <div className="flex h-[29px] w-[70px] items-center justify-center rounded-tr-[3px] border border-b-0 border-l-0 border-[#b4b1ad] bg-[#dddad6] pl-px">ガイド</div>
      </div>
      <DockTitle><span className="tracking-[0.250px]">アイテムプロパティ</span></DockTitle>
      <div className="flex h-[25px] items-center bg-[#c8c8c8] pl-[6px] font-bold">凡例</div>
      <div className="flex h-[464px] border border-[#b4b1ad]">
        <div className="flex w-[490px] flex-col pl-[12px]">
          <div className="h-[50px] w-[467px] rounded-b-[2px] border border-t-0 border-[#d3d0cb] bg-[#ebe8e3] pl-[12px]">
            <div className="ml-[111px] h-[3px] w-[330px] rounded-b-[3px] border border-t-0 border-[#b4b1ad] bg-white" />
            <div className="flex h-[39px] items-center gap-[5px]"><Check on /><span>大きさを内容に合わせる</span></div>
          </div>
          <div className="flex h-[31px] items-center gap-[8px] pt-[4px] font-bold tracking-[0.100px] text-[#4a4a4a]">
            <svg width="13" height="8"><path d="M1 0.500h11L6.500 7.500z" fill="#333" /></svg><span>凡例アイテム</span>
          </div>
          <div className="h-[377px] w-[467px] rounded-[2px] border border-[#d3d0cb] bg-[#ebe8e3] px-[12px] pt-[12px]">
            <div className="flex h-7 w-[440px] items-center justify-between">
              <div className="flex items-center gap-[5px]"><Check /><span>自動更新</span></div>
              <div className="flex h-7 w-[91px] items-center justify-center rounded-[3px] border border-[#b4b1ad] bg-linear-to-b from-[#fdfdfc] to-[#f0eeeb]">すべて更新</div>
            </div>
            <div className="mt-[6px] h-[250px] w-[440px] border border-[#b4b1ad] bg-white">
              <TreeRow label="Track170420, tracks" track="tracking-[0.780px]"><path d="M0 10.500H16" stroke={dark} strokeWidth="2.500" /></TreeRow>
              <TreeRow label="協議範囲">
                <rect x="1" y="1" width="14" height="14" fill="#fff" stroke="#555" strokeWidth="1.500" />
                <path d="M2 8l6-6 6 6-6 6zM2 2l12 12M14 2L2 14" fill="none" stroke="#555" strokeWidth="0.800" />
              </TreeRow>
              <TreeRow label="roads_utm54" branch track="tracking-[0.270px]"><path d="M1 3L5 13L10 2L15 1" fill="none" stroke="#aaa" /><g fill="#fff" stroke="#999" strokeWidth="0.700"><circle cx="1.500" cy="3" r="1" /><circle cx="5" cy="13" r="1" /><circle cx="10" cy="2" r="1" /></g></TreeRow>
              <TreeRow label="buildings_utm54" track="tracking-[0.120px]"><rect x="0.500" y="0.500" width="15" height="15" fill="#b8b8b8" stroke="#888" /></TreeRow>
              <TreeRow label="buildings" muted track="tracking-[-0.150px]"><rect x="0.500" y="0.500" width="15" height="15" fill="#bdb395" stroke="#7d7561" /></TreeRow>
              <TreeRow label="roads" muted><path d="M0 8.500H16" stroke="#cdb878" /></TreeRow>
              <TreeRow label="WL_polygon_utm54" sel track="tracking-[0.460px]"><rect width="16" height="16" fill="#83addb" /></TreeRow>
            </div>
            <div className="mt-[6px] flex gap-[3px]">
              <ToolButton><Ic x={123} y={48} w={18} h={20}><path d="M125 63H175L150 101Z" fill="#6b98c8" stroke="#2f5278" strokeWidth="3" transform="translate(0 -4)" /></Ic></ToolButton>
              <ToolButton><Ic x={216} y={52} w={18} h={20}><path d="M218 103H268L243 63Z" fill="#6b98c8" stroke="#2f5278" strokeWidth="3" /></Ic></ToolButton>
              <ToolButton><Ic x={306} y={54} w={20} h={20}><g fill="none" stroke="#888" strokeWidth="3"><path d="M324 68v27h24M316 76h-5v29h26v-6M325 68h31v27h-31zM337 85V66q0-10 5-5v24" /></g><path d="M337 85V66q0-10 5-5v20" fill="none" stroke="#6b98c8" strokeWidth="2.500" /><circle cx="351" cy="102" r="11" fill="#5b8f5b" /><path d="M351 95v14M344 102h14" stroke="#fff" strokeWidth="4" /></Ic></ToolButton>
              <ToolButton><Ic x={400} y={54} w={20} h={20}><path d="M421 58h16v17h17v17h-17v17h-16V92h-17V75h17z" fill="#fff" stroke="#4f8a52" strokeWidth="3" /><path d="M429 65v37M411 83.500h36" stroke="#7bad7d" strokeWidth="6" /></Ic></ToolButton>
              <ToolButton><Ic x={493} y={54} w={20} h={20}><rect x="497" y="75" width="50" height="18" fill="#fff" stroke="#f05050" strokeWidth="3" /><rect x="504" y="82" width="36" height="5" fill="#f08080" stroke="#f05050" strokeWidth="2" /></Ic></ToolButton>
              <ToolButton><Ic x={583} y={54} w={20} h={20}><path d="M585 57h33l13 13v41h-46z" fill="#fff" stroke="#aaa" strokeWidth="3" /><path d="M604 107l4-17 20-31 10 7-20 31z" fill="#e9cf3f" stroke="#777" strokeWidth="2.500" /><path d="M604 107l3-11 8 5z" fill="#333" /></Ic></ToolButton>
              <ToolButton><Ic x={678} y={54} w={20} h={20}><path d="M690 61h34v12h-4q-1-6-7-6h-11l13 16-15 18h14q7 0 8-7h4l-2 14h-35v-4l17-21-16-18z" fill="#a3129e" stroke="#6b0a70" strokeWidth="1.200" /></Ic></ToolButton>
              <ToolButton><Ic x={772} y={54} w={20} h={20}><path d="M776 66h50l-17 21v23h-14V87z" fill="#7ba4d0" stroke="#4773a3" strokeWidth="3" /><path d="M776 58h50v9h-50z" fill="#ffee3e" stroke="#c5a820" strokeWidth="2" /></Ic></ToolButton>
              <div className="flex">
                <ToolButton><Ic x={864} y={54} w={20} h={20}><path d="M893 66q-4-6-12-5-6 2-5 8 1 5 8 6-9 0-10 8 0 9 9 9 8 0 11-6" fill="none" stroke="#5c2f66" strokeWidth="5" /><path d="M898 108V88q13-9 23 0v20h-6V96h-10v12z" fill="#bbb" stroke="#888" strokeWidth="2" /></Ic></ToolButton>
                <div className="flex h-[27px] w-3 items-center justify-center rounded-r-[3px] border border-l-0 border-[#b4b1ad] bg-[#f3f1ee]"><svg width="9" height="6"><path d="M0 0.500h9L4.500 5.500z" fill="#222" /></svg></div>
              </div>
            </div>
            <div className="flex h-[38px] items-center gap-[5px] whitespace-nowrap"><Check /><span className="tracking-[0.050px]">現在の地図帳地物の内部のアイテムのみを表示する</span></div>
          </div>
        </div>
        <div className="flex w-[14px] flex-col border-l border-[#b4b1ad] bg-[#e2e0dd]">
          <div className="flex h-[14px] items-center justify-center border-b border-[#b4b1ad] bg-[#f7f6f4]"><svg width="8" height="5"><path d="M0 4.500h8L4 0.500z" fill="#444" /></svg></div>
          <div className="h-[71px]" />
          <div className="h-[186px] border-y border-[#b4b1ad] bg-[#f9f8f7]" />
          <div className="flex-1" />
          <div className="flex h-[14px] items-center justify-center border-t border-[#b4b1ad] bg-[#f7f6f4]"><svg width="8" height="5"><path d="M0 0.500h8L4 4.500z" fill="#444" /></svg></div>
        </div>
      </div>
    </div>
  );
}

function StatusBar() {
  return (
    <div className="flex h-[34px] items-center pl-[6px]">
      <div className="w-[839px] pt-px tracking-[0.100px]">1アイテムが選択されました</div>
      <div className="w-[324px] pt-px tracking-[0.100px] whitespace-nowrap">x: 97.8462 mm y: 143.403 mm page: 2</div>
      <div className="flex h-[29px] w-[206px] rounded-[3px] border border-[#aeaba6] bg-white">
        <div className="flex flex-1 items-center pl-[3px] tracking-[0.200px]">63.8%</div>
        <div className="flex w-[19px] items-center justify-center border-l border-[#b4b1ad] bg-[#f5f3f1]"><svg width="8" height="5"><path d="M0 0h8L4 4.500z" fill="#444" /></svg></div>
      </div>
      <svg width="131" height="34" className="block">
        <rect x="8.500" y="15.500" width="97" height="4" rx="2" fill="#d7d4d0" stroke="#b4b1ad" />
        <rect x="8.500" y="15.500" width="8" height="4" rx="2" fill="#3daee9" stroke="#2f7fb0" />
        <rect x="13.500" y="11.500" width="12" height="12" rx="3" fill="#fcfbfa" stroke="#aaa7a2" />
        {[0, 1, 2, 3].map((i) => range(i + 1).map((j) => <rect key={`${i}${j}`} x={128 - j * 3} y={22 + i * 3} width="1" height="1" fill="#b5b2ad" />))}
      </svg>
    </div>
  );
}

function Menu({ t, k }: { t: string; k?: string }) {
  return <span className="whitespace-nowrap">{t}{k && <span className="tracking-[0.900px]">(<span className="underline underline-offset-3">{k}</span>)</span>}</span>;
}

export default function App() {
  return (
    <div className="relative h-[958px] w-[1506px] overflow-hidden bg-[#efece7] font-['Noto_Sans','Noto_Sans_CJK_JP',sans-serif] text-[15px] leading-none text-[#111]">
      <div className="relative flex h-6 items-center justify-center bg-[#444] pb-px text-[15px] font-bold text-[#dcdcdc]">
        <span>*所在確認調査報告書</span>
        <svg width="60" height="14" className="absolute right-[1px] top-[5px]" fill="none" stroke="#ddd" strokeWidth="2">
          <path d="M0 10H8M44 4l7 7M51 4l-7 7" /><rect x="23" y="4" width="6" height="6" />
        </svg>
      </div>
      <div className="flex h-[26px] items-center border-b border-[#d2cfca] pl-[10px]">
        <div className="w-[110px]"><Menu t="レイアウト" k="L" /></div>
        <div className="w-[65px]"><Menu t="編集" k="E" /></div>
        <div className="w-[81px]"><Menu t="ビュー" k="V" /></div>
        <div className="w-[90px]"><Menu t="アイテム" k="I" /></div>
        <div className="w-[140px]"><Menu t="アイテムを追加" k="A" /></div>
        <div className="w-[59px]"><Menu t="地図帳" /></div>
        <Menu t="設定" />
      </div>
      <TopBarOne />
      <TopBarTwo />
      <div className="flex h-[797px]">
        <Toolbox />
        <div className="flex w-[960px] flex-col">
          <RulerTop />
          <div className="flex">
            <RulerLeft />
            <Canvas />
            <svg width="6" height="771" className="block"><g fill="#c4c1bc">{range(6).map((i) => <rect key={i} x="3" y={367 + i * 3} width="1" height="1" />)}</g></svg>
          </div>
        </div>
        <div className="flex w-[506px] flex-col">
          <ItemsDock />
          <div className="h-[8px]" />
          <PropertiesDock />
        </div>
      </div>
      <StatusBar />
      <div className="absolute left-[1096px] top-[376px] h-[38px] w-[163px] border-[5px] border-[#f00]" />
      <div className="absolute left-[1018px] top-[555px] h-[26px] w-[95px] border-[5px] border-[#f00]" />
      <div className="absolute left-[1024px] top-[628px] h-[112px] w-[447px] border-[5px] border-[#f00]" />
      <div className="absolute left-[1144px] top-[839px] h-[39px] w-[41px] border-[5px] border-[#f00]" />
    </div>
  );
}
